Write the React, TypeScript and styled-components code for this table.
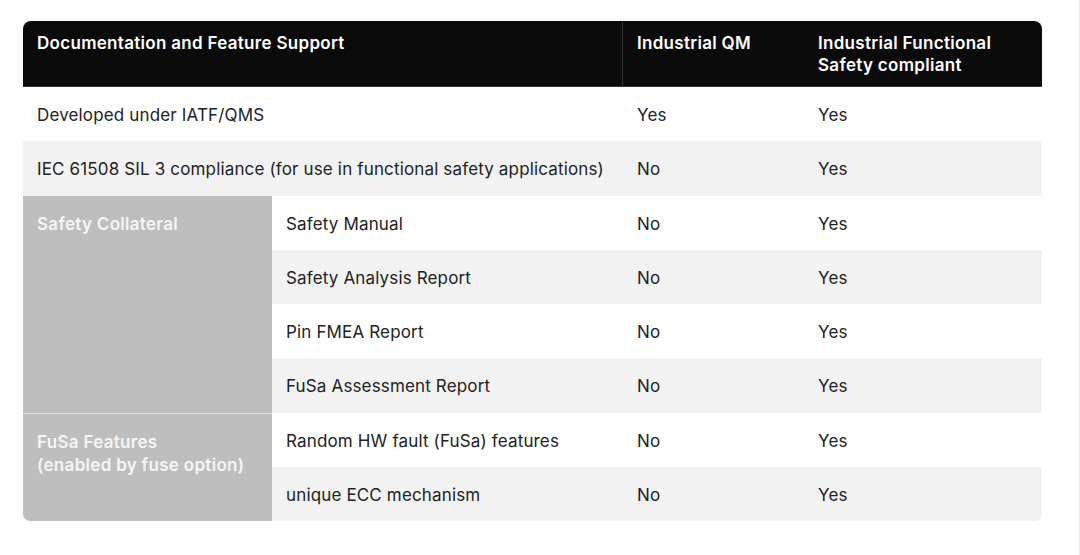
import React from "react";
import styled, { createGlobalStyle } from "styled-components";

const Global = createGlobalStyle`
  html, body { margin: 0; padding: 0; background: #ffffff; }
  body { font-family: Inter, "Noto Sans", "Liberation Sans", sans-serif; }
`;

const Page = styled.div`
  box-sizing: border-box;
  width: 1080px;
  min-height: 555px;
  padding: 21px 0 0 23px;
  border-right: 2px solid #f2f2f2;
`;

const Table = styled.div`
  width: 1019px;
  display: grid;
  grid-template-columns: 249px 351px 181px 238px;
  grid-template-rows: 66px repeat(8, 54.25px);
  border-radius: 8px 8px 7px 7px;
  overflow: hidden;
  font-size: 17px;
  line-height: 22px;
  letter-spacing: 0.15px;
  color: #222222;
`;

const Head = styled.div<{ $span?: number; $divider?: boolean }>`
  grid-column: span ${(p) => p.$span ?? 1};
  background: #0b0b0b;
  color: #ffffff;
  font-weight: 600;
  padding: 11px 14px 0;
  border-bottom: 1px solid #3a3a3a;
  border-right: ${(p) => (p.$divider ? "1px solid #2e2e2e" : "none")};
  letter-spacing: 0.3px;
`;

const Cell = styled.div<{ $span?: number; $alt?: boolean }>`
  grid-column: span ${(p) => p.$span ?? 1};
  display: flex;
  align-items: center;
  padding: 2px 14px 0;
  background: ${(p) => (p.$alt ? "#f2f2f2" : "#ffffff")};
  white-space: nowrap;
`;

const Group = styled.div<{ $rows: number; $sep?: boolean }>`
  grid-row: span ${(p) => p.$rows};
  background: #bebebe;
  color: #f5f5f5;
  font-weight: 600;
  line-height: 23px;
  letter-spacing: 0.3px;
  padding: 17px 14px 0;
  border-top: ${(p) => (p.$sep ? "1px solid #e2e2e2" : "none")};
`;

type Row = { label: string; qm: string; fs: string };

const collateral: Row[] = [
  { label: "Safety Manual", qm: "No", fs: "Yes" },
  { label: "Safety Analysis Report", qm: "No", fs: "Yes" },
  { label: "Pin FMEA Report", qm: "No", fs: "Yes" },
  { label: "FuSa Assessment Report", qm: "No", fs: "Yes" },
];

const features: Row[] = [
  { label: "Random HW fault (FuSa) features", qm: "No", fs: "Yes" },
  { label: "unique ECC mechanism", qm: "No", fs: "Yes" },
];

const SubRow = ({ row, alt }: { row: Row; alt: boolean }) => (
  <>
    <Cell $alt={alt}>{row.label}</Cell>
    <Cell $alt={alt}>{row.qm}</Cell>
    <Cell $alt={alt}>{row.fs}</Cell>
  </>
);

export default function App() {
  return (
    <>
      <Global />
      <Page>
        <Table>
          <Head $span={2} $divider>
            Documentation and Feature Support
          </Head>
          <Head>Industrial QM</Head>
          <Head>
            Industrial Functional
            <br />
            Safety compliant
          </Head>

          <Cell $span={2}>Developed under IATF/QMS</Cell>
          <Cell>Yes</Cell>
          <Cell>Yes</Cell>

          <Cell $span={2} $alt>
            IEC 61508 SIL 3 compliance (for use in functional safety applications)
          </Cell>
          <Cell $alt>No</Cell>
          <Cell $alt>Yes</Cell>

          <Group $rows={4}>Safety Collateral</Group>
          {collateral.map((r, i) => (
            <SubRow key={r.label} row={r} alt={i % 2 === 1} />
          ))}

          <Group $rows={2} $sep>
            FuSa Features
            <br />
            (enabled by fuse option)
          </Group>
          {features.map((r, i) => (
            <SubRow key={r.label} row={r} alt={i % 2 === 1} />
          ))}
        </Table>
      </Page>
    </>
  );
}
